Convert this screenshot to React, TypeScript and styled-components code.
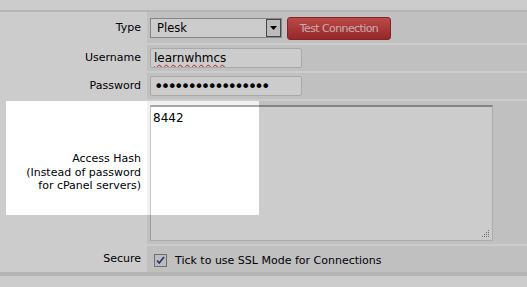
import React from "react";
import styled, { createGlobalStyle } from "styled-components";

const Global = createGlobalStyle`
  html, body { margin: 0; padding: 0; background: #ffffff; }
  body { font-family: "DejaVu Sans", Tahoma, sans-serif; font-size: 11px; color: #000; }
  #root { width: 527px; height: 287px; overflow: hidden; }
`;

const Page = styled.div`
  position: relative;
  width: 527px;
  height: 287px;
  padding-top: 10px;
  box-sizing: border-box;
`;

const FormTable = styled.div`
  display: grid;
  grid-template-columns: 145px 1fr;
  grid-template-rows: 31px 26px 26px 143px 26px;
  gap: 2px;
  background: #ffffff;
  border-top: 2px solid #e2e2e2;
  border-bottom: 4px solid #e2e2e2;
`;

const Label = styled.div`
  background: #ffffff;
  display: flex;
  align-items: center;
  justify-content: flex-end;
  text-align: right;
  padding-right: 4px;
  line-height: 13.5px;
  font-size: 11px;
  color: #000008;
`;

const Field = styled.div<{ $top?: boolean }>`
  background: #f1f1f1;
  display: flex;
  align-items: ${(p) => (p.$top ? "flex-start" : "center")};
  padding-left: 3px;
  padding-top: ${(p) => (p.$top ? "3px" : "0")};
  gap: 5px;
`;

const SelectBox = styled.div`
  width: 132px;
  height: 20px;
  box-sizing: border-box;
  border: 1px solid #a8a8a8;
  background: #ffffff;
  display: flex;
  align-items: center;
  justify-content: space-between;
  padding-left: 6px;
  font-size: 11.5px;
  color: #000;
`;

const ArrowBox = styled.div`
  width: 15px;
  height: 18px;
  box-sizing: border-box;
  border: 1px solid #5a5a5a;
  background: #ececec;
  display: flex;
  align-items: center;
  justify-content: center;
`;

const RedButton = styled.button`
  width: 104px;
  height: 23px;
  border: 1px solid #a82c2c;
  border-radius: 3px;
  background: linear-gradient(#ea5c5c, #bc3232);
  color: rgba(255, 226, 226, 0.95);
  font-family: "DejaVu Sans", Tahoma, sans-serif;
  font-size: 11px;
  letter-spacing: -0.6px;
  padding: 0;
  margin-top: 1px;
`;

const InputBox = styled.div`
  width: 152px;
  height: 20px;
  box-sizing: border-box;
  border: 1px solid #d4d4d4;
  border-radius: 2px;
  background: #ffffff;
  padding: 0 0 0 3px;
  display: flex;
  align-items: center;
  font-family: "DejaVu Sans", Tahoma, sans-serif;
  font-size: 12px;
  color: #000;
  overflow: hidden;
  white-space: nowrap;
`;

const Misspelled = styled.span`
  text-decoration: underline wavy #e02020;
  text-decoration-thickness: 1px;
  text-underline-offset: 2px;
`;

const Dots = styled.span`
  font-size: 16px;
  letter-spacing: -2.75px;
  line-height: 1;
  margin-top: 1px;
`;

const AreaWrap = styled.div`
  position: relative;
  width: 343px;
  height: 136px;
  margin-top: 1px;
`;

const TextArea = styled.textarea`
  width: 100%;
  height: 100%;
  box-sizing: border-box;
  resize: none;
  border: 1px solid #d8d8d8;
  border-top: 2px solid #a6a6a6;
  border-left-color: #c4c4c4;
  background: #ffffff;
  padding: 4px 2px;
  font-family: "DejaVu Sans", Tahoma, sans-serif;
  font-size: 12px;
  color: #000;
  outline: none;
`;

const Grip = styled.svg`
  position: absolute;
  right: 3px;
  bottom: 3px;
`;

const CheckRow = styled.label`
  display: flex;
  align-items: center;
  gap: 8px;
  padding-left: 4px;
  padding-top: 2px;
  font-size: 11px;
  color: #000008;
`;

const CheckBox = styled.span`
  width: 13px;
  height: 13px;
  box-sizing: border-box;
  border: 1px solid #8a8a8a;
  background: #ececec;
  display: flex;
  align-items: center;
  justify-content: center;
`;

const Spotlight = styled.div`
  position: absolute;
  left: 6px;
  top: 101px;
  width: 253px;
  height: 114px;
  box-shadow: 0 0 0 2000px rgba(0, 0, 0, 0.2);
  pointer-events: none;
`;

const gripDots = [
  [6, 0],
  [4, 2],
  [6, 2],
  [2, 4],
  [4, 4],
  [6, 4],
  [0, 6],
  [2, 6],
  [4, 6],
  [6, 6],
];

export default function App() {
  return (
    <>
      <Global />
      <Page>
        <FormTable>
          <Label>Type</Label>
          <Field>
            <SelectBox>
              Plesk
              <ArrowBox>
                <svg width="7" height="4" viewBox="0 0 7 4">
                  <path d="M0 0h7L3.5 4z" fill="#000" />
                </svg>
              </ArrowBox>
            </SelectBox>
            <RedButton type="button">Test Connection</RedButton>
          </Field>

          <Label>Username</Label>
          <Field>
            <InputBox>
              <Misspelled>learnwhmcs</Misspelled>
            </InputBox>
          </Field>

          <Label>Password</Label>
          <Field>
            <InputBox>
              <Dots>{"•".repeat(17)}</Dots>
            </InputBox>
          </Field>

          <Label>
            Access Hash
            <br />
            (Instead of password
            <br />
            for cPanel servers)
          </Label>
          <Field $top>
            <AreaWrap>
              <TextArea defaultValue="8442" spellCheck={false} />
              <Grip width="8" height="8" viewBox="0 0 8 8">
                {gripDots.map(([x, y], i) => (
                  <rect key={i} x={x} y={y} width="1" height="1" fill="#8a8a8a" />
                ))}
              </Grip>
            </AreaWrap>
          </Field>

          <Label>Secure</Label>
          <Field>
            <CheckRow>
              <CheckBox>
                <svg width="9" height="9" viewBox="0 0 9 9">
                  <path d="M1 4.5l2.2 2.5L8 1" stroke="#2a3f9a" strokeWidth="1.6" fill="none" />
                </svg>
              </CheckBox>
              Tick to use SSL Mode for Connections
            </CheckRow>
          </Field>
        </FormTable>
        <Spotlight />
      </Page>
    </>
  );
}
